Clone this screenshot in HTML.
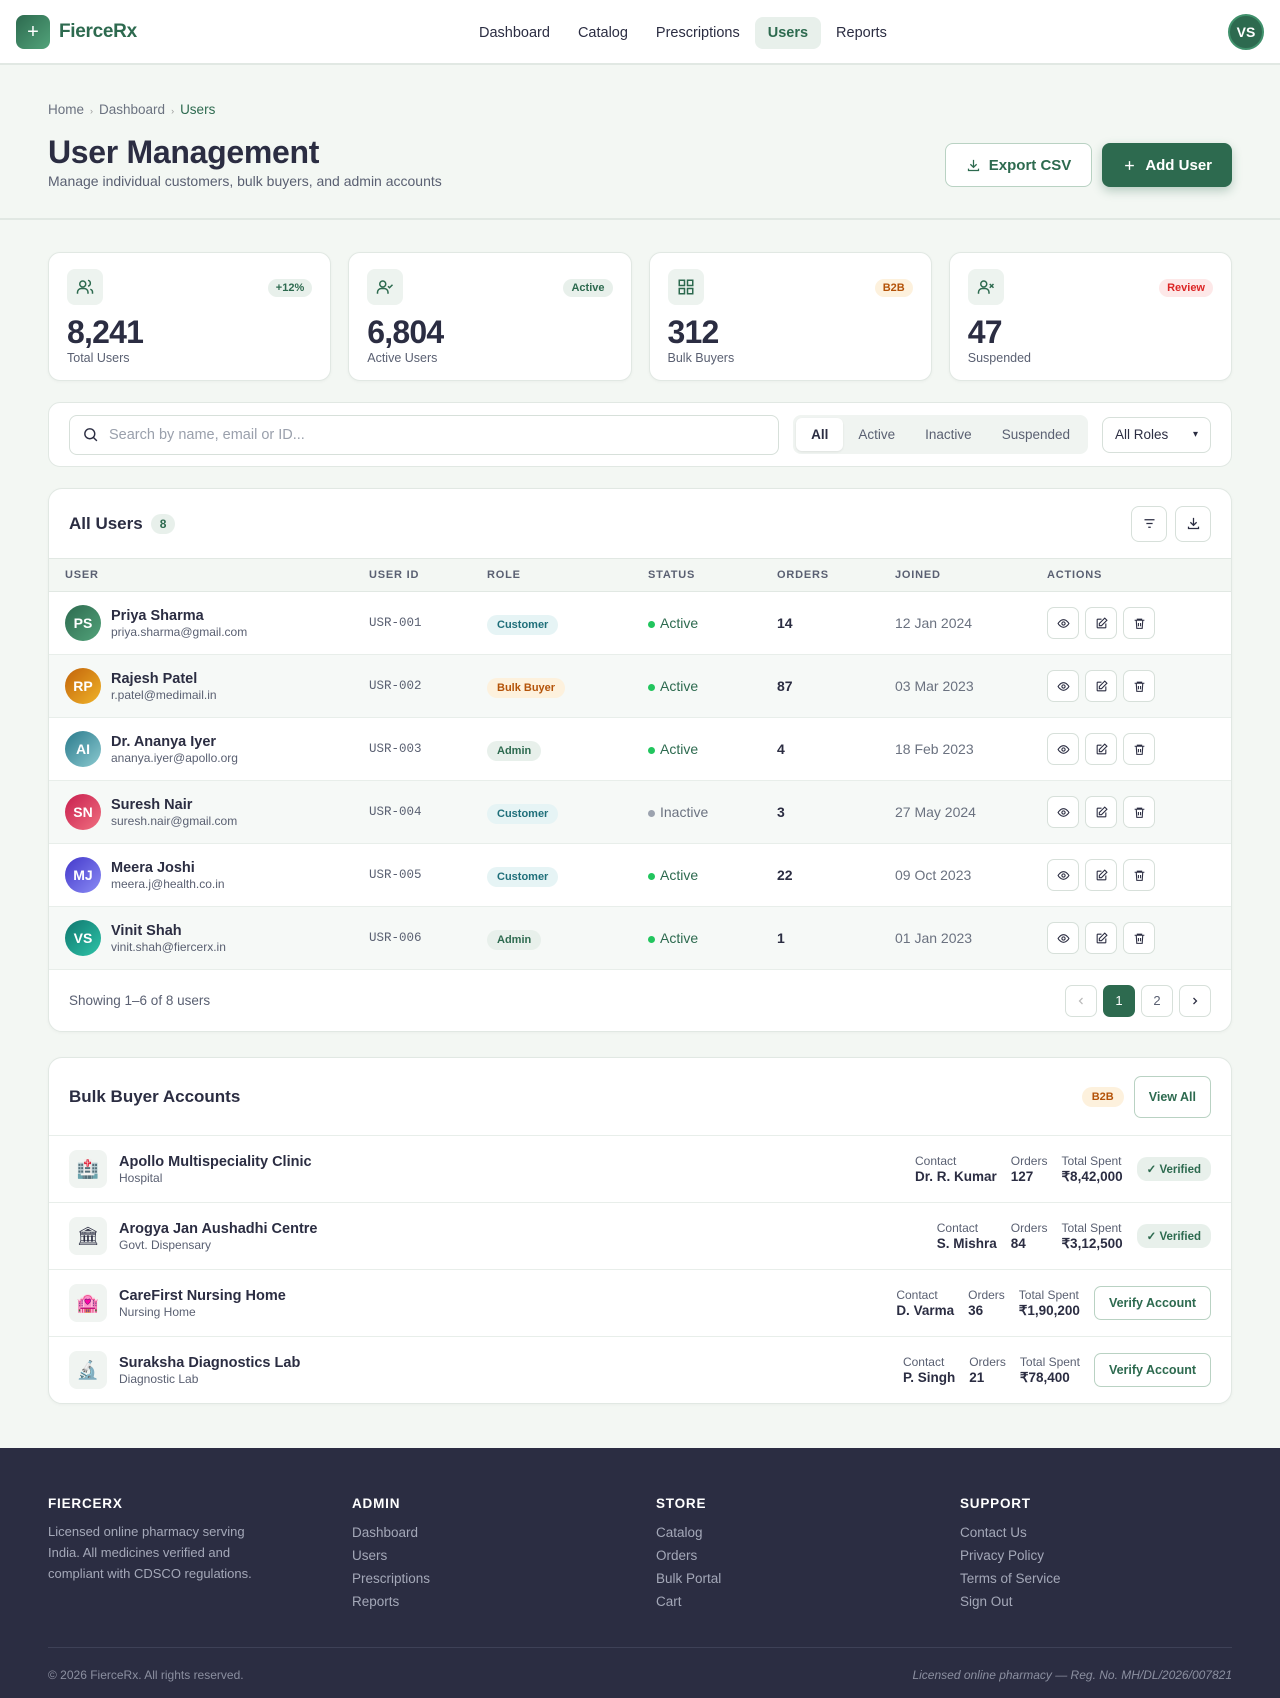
<!DOCTYPE html>
<html><head><meta charset="utf-8"><style>
*{box-sizing:border-box;margin:0;padding:0}
body{width:1280px;height:1698px;overflow:hidden;background:#f3f7f3;font-family:"Liberation Sans",sans-serif;color:#2b2d42}
svg{display:block}
.nav{height:65px;background:#fff;border-bottom:2px solid #e1e8e3;position:relative}
.logo{position:absolute;left:16px;top:15px;display:flex;align-items:center;gap:9px}
.logo .b{width:34px;height:34px;border-radius:8px;background:linear-gradient(135deg,#2d6a4f,#52a37a);color:#fff;font-size:20px;display:flex;align-items:center;justify-content:center}
.logo span{font-size:19px;font-weight:700;color:#2d6a4f;letter-spacing:-.3px}
.links{position:absolute;left:466px;top:17px;display:flex;gap:2px}
.links a{font-size:14.5px;color:#2b2d42;padding:8px 13px;border-radius:8px}
.links a.on{background:#e8f0eb;color:#2d6a4f;font-weight:700}
.av{position:absolute;right:16px;top:14px;width:36px;height:36px;border-radius:50%;background:#2d6a4f;border:2px solid #40916c;color:#fff;font-size:14px;font-weight:700;display:flex;align-items:center;justify-content:center}
.hdr{height:155px;border-bottom:2px solid #e1e8e3;position:relative;padding:37px 48px 0}
.bc{font-size:13.5px;color:#6b7280}.bc b{font-weight:400;color:#2d6a4f}.bc i{font-style:normal;font-size:9px;margin:0 6px;color:#999}
h1{font-size:32px;font-weight:700;margin-top:17px;letter-spacing:-.3px}
.sub{font-size:14px;color:#5a6072;margin-top:2px}
.btns{position:absolute;right:48px;top:78px;display:flex;gap:10px}
.btn{height:44px;border-radius:8px;display:flex;align-items:center;gap:8px;font-size:15px;font-weight:700;padding:0 20px}
.b1{border:1px solid #b9d2c3;background:#fff;color:#2d6a4f}
.b2{background:#2d6a4f;color:#fff;box-shadow:0 4px 10px rgba(45,106,79,.3)}
.main{padding:32px 48px 0}
.stats{display:grid;grid-template-columns:repeat(4,1fr);gap:17px}
.st{background:#fff;border:1px solid #e1e8e3;border-radius:12px;height:129px;padding:16px 18px;position:relative;box-shadow:0 1px 3px rgba(0,0,0,.04)}
.ib{width:36px;height:36px;border-radius:8px;background:#edf3ef;display:flex;align-items:center;justify-content:center}
.tg{position:absolute;right:18px;top:26px;font-size:11px;font-weight:700;padding:3px 8px;border-radius:10px}
.num{font-size:32px;font-weight:700;margin-top:8px;letter-spacing:-.8px;line-height:38px}
.lbl{font-size:12.5px;color:#5a6072}
.flt{margin-top:21px;background:#fff;border:1px solid #e1e8e3;border-radius:12px;height:65px;padding:12px 20px;display:flex;align-items:center;gap:14px}
.srch{flex:1;height:40px;border:1px solid #d7e0da;border-radius:8px;display:flex;align-items:center;padding-left:12px;gap:10px;color:#9aa0ac;font-size:14.5px}
.seg{background:#f0f4f1;border-radius:8px;padding:3px;display:flex}
.seg span{font-size:13.5px;color:#5a6072;padding:9px 15px;border-radius:6px}
.seg .on{background:#fff;color:#2b2d42;font-weight:700;box-shadow:0 1px 2px rgba(0,0,0,.08)}
.sel{width:109px;height:36px;border:1px solid #d7e0da;border-radius:8px;font-size:13.5px;display:flex;align-items:center;padding:0 12px;justify-content:space-between}
.card{background:#fff;border:1px solid #e1e8e3;border-radius:14px;overflow:hidden;box-shadow:0 1px 3px rgba(0,0,0,.04)}
.ch{display:flex;align-items:center;padding:0 20px}
.ch h3{font-size:17px;font-weight:700}
.cnt{background:#e8f0eb;color:#2d6a4f;font-size:12px;font-weight:700;padding:3px 9px;border-radius:10px;margin-left:8px}
.ic{width:36px;height:36px;border:1px solid #d7e0da;border-radius:8px;display:flex;align-items:center;justify-content:center}
table{width:100%;border-collapse:collapse}
th{background:#f3f7f3;height:33px;font-size:11px;color:#5a6072;letter-spacing:.8px;text-align:left;font-weight:700;border-top:1px solid #e1e8e3;border-bottom:1px solid #e1e8e3}
td{height:63px;border-bottom:1px solid #e8eeea;font-size:14px}
tr:nth-child(odd) td{background:#f6f9f7}
.u{display:flex;align-items:center;gap:10px}
.ua{width:36px;height:36px;border-radius:50%;color:#fff;font-size:14px;font-weight:700;display:flex;align-items:center;justify-content:center}
.un{font-weight:700;font-size:14.5px}.ue{font-size:12px;color:#5a6072;margin-top:1px}
.mono{font-family:"Liberation Mono",monospace;font-size:12.5px;color:#5a6072}
.pill{font-size:11px;font-weight:700;padding:4px 10px;border-radius:10px}
.cu{background:#e6f4f5;color:#1f6f7a}.bb{background:#fdf1dd;color:#b45309}.ad{background:#e8f0eb;color:#2d6a4f}
.dot{display:inline-block;width:7px;height:7px;border-radius:50%;background:#22c55e;margin-right:5px}
.act{color:#2d6a4f}.ina{color:#6b7280}
.acts{display:flex;gap:6px}.acts div{width:32px;height:32px;border:1px solid #d7e0da;border-radius:7px;display:flex;align-items:center;justify-content:center;background:#fff}
.pg{display:flex;gap:6px}.pg div{width:32px;height:32px;border:1px solid #d7e0da;border-radius:7px;display:flex;align-items:center;justify-content:center;font-size:13px}
.br{height:67px;border-top:1px solid #e8eeea;display:flex;align-items:center;padding:0 20px}
.bi{width:38px;height:38px;border-radius:8px;background:#f0f4f1;display:flex;align-items:center;justify-content:center;font-size:18px;margin-right:12px}
.bn{font-weight:700;font-size:14.5px}.bt{font-size:12px;color:#5a6072;margin-top:1px}
.meta{margin-left:auto;display:flex;gap:14px;align-items:center}
.meta div{font-size:12px;color:#5a6072}.meta b{display:block;font-size:13.5px;color:#2b2d42;margin-top:1px}
.ver{background:#e8f0eb;color:#2d6a4f;font-size:11.5px;font-weight:700;padding:5px 10px;border-radius:10px}
.vb{border:1px solid #b9d2c3;border-radius:7px;color:#2d6a4f;font-size:12.5px;font-weight:700;padding:9px 14px}
.ft{position:absolute;top:1448px;left:0;width:1280px;height:250px;background:#2b2d42;padding:48px 48px 0}
.fc{display:grid;grid-template-columns:repeat(4,1fr);gap:32px}
.fc h4{color:#fff;font-size:13.5px;letter-spacing:.8px;margin-bottom:10px}
.fc p{color:#a4a8b8;font-size:13px;line-height:21px;width:215px}
.fc a{display:block;color:#a4a8b8;font-size:13.5px;line-height:23px}
.fb{border-top:1px solid #3e4157;margin-top:34px;padding-top:20px;display:flex;justify-content:space-between;font-size:12px;color:#8b8fa0}
</style></head><body>
<div class="nav">
 <div class="logo"><div class="b">+</div><span>FierceRx</span></div>
 <div class="links"><a>Dashboard</a><a>Catalog</a><a>Prescriptions</a><a class="on">Users</a><a>Reports</a></div>
 <div class="av">VS</div>
</div>
<div class="hdr">
 <div class="bc">Home<i>›</i>Dashboard<i>›</i><b>Users</b></div>
 <h1>User Management</h1>
 <div class="sub">Manage individual customers, bulk buyers, and admin accounts</div>
 <div class="btns">
  <div class="btn b1"><svg width="15" height="15" viewBox="0 0 24 24" fill="none" stroke="#2d6a4f" stroke-width="2"><path d="M12 3v12M7 10l5 5 5-5M4 17v3h16v-3"/></svg>Export CSV</div>
  <div class="btn b2"><svg width="15" height="15" viewBox="0 0 24 24" fill="none" stroke="#fff" stroke-width="2.2"><path d="M12 5v14M5 12h14"/></svg>Add User</div>
 </div>
</div>
<div class="main">
 <div class="stats">
  <div class="st"><div class="ib"><svg width="18" height="18" viewBox="0 0 24 24" fill="none" stroke="#2d6a4f" stroke-width="2"><circle cx="9" cy="8" r="4"/><path d="M2 21v-2a5 5 0 0 1 5-5h4a5 5 0 0 1 5 5v2M16 3.1a4 4 0 0 1 0 7.8M22 21v-2a4 4 0 0 0-3-3.9"/></svg></div><span class="tg" style="background:#e8f0eb;color:#2d6a4f">+12%</span><div class="num">8,241</div><div class="lbl">Total Users</div></div>
  <div class="st"><div class="ib"><svg width="18" height="18" viewBox="0 0 24 24" fill="none" stroke="#2d6a4f" stroke-width="2"><circle cx="9" cy="8" r="4"/><path d="M2 21v-2a5 5 0 0 1 5-5h4a5 5 0 0 1 5 5v2M16 11l2 2 4-4"/></svg></div><span class="tg" style="background:#e8f0eb;color:#2d6a4f">Active</span><div class="num">6,804</div><div class="lbl">Active Users</div></div>
  <div class="st"><div class="ib"><svg width="18" height="18" viewBox="0 0 24 24" fill="none" stroke="#2d6a4f" stroke-width="2"><rect x="3" y="3" width="7" height="7"/><rect x="14" y="3" width="7" height="7"/><rect x="3" y="14" width="7" height="7"/><rect x="14" y="14" width="7" height="7"/></svg></div><span class="tg" style="background:#fdf1dd;color:#b45309">B2B</span><div class="num">312</div><div class="lbl">Bulk Buyers</div></div>
  <div class="st"><div class="ib"><svg width="18" height="18" viewBox="0 0 24 24" fill="none" stroke="#2d6a4f" stroke-width="2"><circle cx="9" cy="8" r="4"/><path d="M2 21v-2a5 5 0 0 1 5-5h4a5 5 0 0 1 5 5v2M17 8l5 5M22 8l-5 5"/></svg></div><span class="tg" style="background:#fde8e8;color:#dc2626">Review</span><div class="num">47</div><div class="lbl">Suspended</div></div>
 </div>
 <div class="flt">
  <div class="srch"><svg width="17" height="17" viewBox="0 0 24 24" fill="none" stroke="#2b2d42" stroke-width="2"><circle cx="11" cy="11" r="7"/><path d="M21 21l-5-5"/></svg>Search by name, email or ID...</div>
  <div class="seg"><span class="on">All</span><span>Active</span><span>Inactive</span><span>Suspended</span></div>
  <div class="sel">All Roles <span style="font-size:10px">▾</span></div>
 </div>
 <div class="card" style="margin-top:21px">
  <div class="ch" style="height:69px"><h3>All Users</h3><span class="cnt">8</span>
   <div style="margin-left:auto;display:flex;gap:8px"><div class="ic"><svg width="15" height="15" viewBox="0 0 24 24" fill="none" stroke="#2b2d42" stroke-width="2"><path d="M4 6h16M7 12h10M10 18h4"/></svg></div><div class="ic"><svg width="15" height="15" viewBox="0 0 24 24" fill="none" stroke="#2b2d42" stroke-width="2"><path d="M12 3v12M7 10l5 5 5-5M4 17v3h16v-3"/></svg></div></div></div>
  <table>
   <tr><th style="padding-left:16px;width:320px">USER</th><th style="width:118px">USER ID</th><th style="width:161px">ROLE</th><th style="width:129px">STATUS</th><th style="width:118px">ORDERS</th><th style="width:152px">JOINED</th><th>ACTIONS</th></tr>
   <tr><td style="padding-left:16px"><div class="u"><div class="ua" style="background:linear-gradient(135deg,#2d6a4f,#52a37a)">PS</div><div><div class="un">Priya Sharma</div><div class="ue">priya.sharma@gmail.com</div></div></div></td><td class="mono">USR-001</td><td><span class="pill cu">Customer</span></td><td><span class="dot"></span><span class="act">Active</span></td><td><b>14</b></td><td class="ina">12 Jan 2024</td><td><div class="acts A"></div></td></tr>
   <tr><td style="padding-left:16px"><div class="u"><div class="ua" style="background:linear-gradient(135deg,#c2630a,#f0b429)">RP</div><div><div class="un">Rajesh Patel</div><div class="ue">r.patel@medimail.in</div></div></div></td><td class="mono">USR-002</td><td><span class="pill bb">Bulk Buyer</span></td><td><span class="dot"></span><span class="act">Active</span></td><td><b>87</b></td><td class="ina">03 Mar 2023</td><td><div class="acts A"></div></td></tr>
   <tr><td style="padding-left:16px"><div class="u"><div class="ua" style="background:linear-gradient(135deg,#2a7a8c,#8ccad0)">AI</div><div><div class="un">Dr. Ananya Iyer</div><div class="ue">ananya.iyer@apollo.org</div></div></div></td><td class="mono">USR-003</td><td><span class="pill ad">Admin</span></td><td><span class="dot"></span><span class="act">Active</span></td><td><b>4</b></td><td class="ina">18 Feb 2023</td><td><div class="acts A"></div></td></tr>
   <tr><td style="padding-left:16px"><div class="u"><div class="ua" style="background:linear-gradient(135deg,#c81e4e,#f07080)">SN</div><div><div class="un">Suresh Nair</div><div class="ue">suresh.nair@gmail.com</div></div></div></td><td class="mono">USR-004</td><td><span class="pill cu">Customer</span></td><td><span class="dot" style="background:#9ca3af"></span><span class="ina">Inactive</span></td><td><b>3</b></td><td class="ina">27 May 2024</td><td><div class="acts A"></div></td></tr>
   <tr><td style="padding-left:16px"><div class="u"><div class="ua" style="background:linear-gradient(135deg,#4338ca,#8b8cf5)">MJ</div><div><div class="un">Meera Joshi</div><div class="ue">meera.j@health.co.in</div></div></div></td><td class="mono">USR-005</td><td><span class="pill cu">Customer</span></td><td><span class="dot"></span><span class="act">Active</span></td><td><b>22</b></td><td class="ina">09 Oct 2023</td><td><div class="acts A"></div></td></tr>
   <tr><td style="padding-left:16px"><div class="u"><div class="ua" style="background:linear-gradient(135deg,#0f766e,#2ec4a8)">VS</div><div><div class="un">Vinit Shah</div><div class="ue">vinit.shah@fiercerx.in</div></div></div></td><td class="mono">USR-006</td><td><span class="pill ad">Admin</span></td><td><span class="dot"></span><span class="act">Active</span></td><td><b>1</b></td><td class="ina">01 Jan 2023</td><td><div class="acts A"></div></td></tr>
  </table>
  <div class="ch" style="height:61px;font-size:13.5px;color:#5a6072">Showing 1–6 of 8 users
   <div class="pg" style="margin-left:auto"><div><svg width="12" height="12" viewBox="0 0 24 24" fill="none" stroke="#bbb" stroke-width="2.5"><path d="M15 6l-6 6 6 6"/></svg></div><div style="background:#2d6a4f;color:#fff;border-color:#2d6a4f">1</div><div>2</div><div><svg width="12" height="12" viewBox="0 0 24 24" fill="none" stroke="#2b2d42" stroke-width="2.5"><path d="M9 6l6 6-6 6"/></svg></div></div></div>
 </div>
 <div class="card" style="margin-top:25px">
  <div class="ch" style="height:77px"><h3>Bulk Buyer Accounts</h3>
   <span class="pill bb" style="margin-left:auto;margin-right:10px">B2B</span><span class="vb" style="padding:13px 14px">View All</span></div>
  <div class="br"><div class="bi">🏥</div><div><div class="bn">Apollo Multispeciality Clinic</div><div class="bt">Hospital</div></div><div class="meta"><div>Contact<b>Dr. R. Kumar</b></div><div>Orders<b>127</b></div><div>Total Spent<b>₹8,42,000</b></div><span class="ver">✓ Verified</span></div></div>
  <div class="br"><div class="bi">🏛</div><div><div class="bn">Arogya Jan Aushadhi Centre</div><div class="bt">Govt. Dispensary</div></div><div class="meta"><div>Contact<b>S. Mishra</b></div><div>Orders<b>84</b></div><div>Total Spent<b>₹3,12,500</b></div><span class="ver">✓ Verified</span></div></div>
  <div class="br"><div class="bi">🏩</div><div><div class="bn">CareFirst Nursing Home</div><div class="bt">Nursing Home</div></div><div class="meta"><div>Contact<b>D. Varma</b></div><div>Orders<b>36</b></div><div>Total Spent<b>₹1,90,200</b></div><span class="vb">Verify Account</span></div></div>
  <div class="br"><div class="bi">🔬</div><div><div class="bn">Suraksha Diagnostics Lab</div><div class="bt">Diagnostic Lab</div></div><div class="meta"><div>Contact<b>P. Singh</b></div><div>Orders<b>21</b></div><div>Total Spent<b>₹78,400</b></div><span class="vb">Verify Account</span></div></div>
 </div>
</div>
<div class="ft">
 <div class="fc">
  <div><h4>FIERCERX</h4><p>Licensed online pharmacy serving India. All medicines verified and compliant with CDSCO regulations.</p></div>
  <div><h4>ADMIN</h4><a>Dashboard</a><a>Users</a><a>Prescriptions</a><a>Reports</a></div>
  <div><h4>STORE</h4><a>Catalog</a><a>Orders</a><a>Bulk Portal</a><a>Cart</a></div>
  <div><h4>SUPPORT</h4><a>Contact Us</a><a>Privacy Policy</a><a>Terms of Service</a><a>Sign Out</a></div>
 </div>
 <div class="fb"><span>© 2026 FierceRx. All rights reserved.</span><i>Licensed online pharmacy — Reg. No. MH/DL/2026/007821</i></div>
</div>
<script>
var h='<div><svg width="13" height="13" viewBox="0 0 24 24" fill="none" stroke="#2b2d42" stroke-width="2"><path d="M2 12s4-7 10-7 10 7 10 7-4 7-10 7S2 12 2 12z"/><circle cx="12" cy="12" r="3"/></svg></div><div><svg width="13" height="13" viewBox="0 0 24 24" fill="none" stroke="#2b2d42" stroke-width="2"><path d="M12 4H5a1 1 0 0 0-1 1v14a1 1 0 0 0 1 1h14a1 1 0 0 0 1-1v-7"/><path d="M18 2l4 4-10 10H8v-4z"/></svg></div><div><svg width="13" height="13" viewBox="0 0 24 24" fill="none" stroke="#2b2d42" stroke-width="2"><path d="M3 6h18M8 6V4h8v2M6 6l1 15h10l1-15M10 11v6M14 11v6"/></svg></div>';
document.querySelectorAll('.A').forEach(function(e){e.innerHTML=h});
</script>
</body></html>
